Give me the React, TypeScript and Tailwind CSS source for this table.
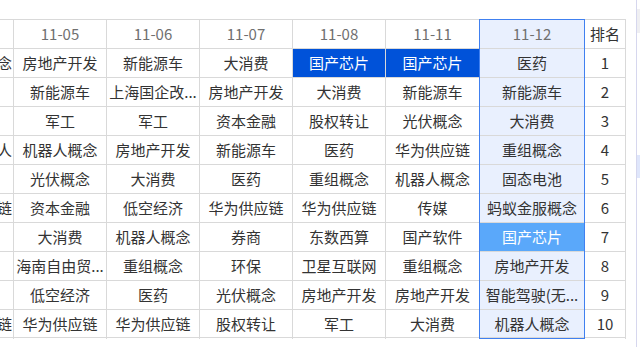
import React from "react";

type Cell = { t: string; v?: "dark" | "light" };

const leftCol: string[] = ["11-04", "机器人概念", "军工", "医药", "人形机器人", "传媒", "华为供应链", "券商", "环保", "大消费", "华为供应链"];

const cols: { head: string; cells: Cell[] }[] = [
  {
    head: "11-05",
    cells: ["房地产开发", "新能源车", "军工", "机器人概念", "光伏概念", "资本金融", "大消费", "海南自由贸...", "低空经济", "华为供应链"].map((t) => ({ t })),
  },
  {
    head: "11-06",
    cells: ["新能源车", "上海国企改...", "军工", "房地产开发", "大消费", "低空经济", "机器人概念", "重组概念", "医药", "华为供应链"].map((t) => ({ t })),
  },
  {
    head: "11-07",
    cells: ["大消费", "房地产开发", "资本金融", "新能源车", "医药", "华为供应链", "券商", "环保", "光伏概念", "股权转让"].map((t) => ({ t })),
  },
  {
    head: "11-08",
    cells: [
      { t: "国产芯片", v: "dark" },
      ...["大消费", "股权转让", "医药", "重组概念", "华为供应链", "东数西算", "卫星互联网", "房地产开发", "军工"].map((t) => ({ t })),
    ],
  },
  {
    head: "11-11",
    cells: [
      { t: "国产芯片", v: "dark" },
      ...["新能源车", "光伏概念", "华为供应链", "机器人概念", "传媒", "国产软件", "重组概念", "房地产开发", "大消费"].map((t) => ({ t })),
    ],
  },
];

const hlCells: Cell[] = [
  { t: "医药" },
  { t: "新能源车" },
  { t: "大消费" },
  { t: "重组概念" },
  { t: "固态电池" },
  { t: "蚂蚁金服概念" },
  { t: "国产芯片", v: "light" },
  { t: "房地产开发" },
  { t: "智能驾驶(无..." },
  { t: "机器人概念" },
];

const font = { fontFamily: '"Noto Sans CJK SC", "Noto Sans", sans-serif' };

function CellBox({
  text,
  idx,
  variant,
  head,
  dark,
  clip,
}: {
  text: string;
  idx: number;
  variant?: "dark" | "light";
  head?: boolean;
  dark?: boolean;
  clip?: boolean;
}) {
  const h = idx === 10 ? "h-[28px] leading-[27px]" : "h-[29px] leading-[28px]";
  let color = "text-[#333333]";
  let bg = "";
  if (head) color = dark ? "text-[#333333]" : "text-[#707070]";
  if (variant === "dark") {
    bg = "bg-[#0052d9]";
    color = "text-white";
  } else if (variant === "light") {
    bg = "bg-[#5aa8fa]";
    color = "text-white";
  }
  return (
    <div
      className={`${h} border-b border-[#d9d9d9] ${bg} ${color} text-[15px] text-center whitespace-nowrap overflow-hidden ${
        clip ? "" : "px-[1px]"
      }`}
    >
      {text}
    </div>
  );
}

export default function App() {
  return (
    <div className="flex h-[347px] w-[640px] overflow-hidden bg-white" style={font}>
      <div className="w-[636px] overflow-hidden pt-[19px]">
        <div className="ml-[-64px] flex">
          <div className="w-[78px] shrink-0 border-t border-r border-[#d9d9d9]">
            {leftCol.map((t, i) => (
              <CellBox key={i} text={t} idx={i} head={i === 0} clip />
            ))}
          </div>
          {cols.map((c, ci) => (
            <div
              key={c.head}
              className={`w-[93px] shrink-0 border-t border-[#d9d9d9] ${ci < 4 ? "border-r" : ""}`}
            >
              <CellBox text={c.head} idx={0} head />
              {c.cells.map((cell, i) => (
                <CellBox key={i} text={cell.t} idx={i + 1} variant={cell.v} />
              ))}
            </div>
          ))}
          <div className="w-[106px] shrink-0 self-start border border-[#4080f0] bg-[#e9f0fe]">
            <CellBox text="11-12" idx={0} head />
            {hlCells.map((cell, i) => (
              <CellBox key={i} text={cell.t} idx={i + 1} variant={cell.v} />
            ))}
          </div>
          <div className="w-[41px] shrink-0 border-t border-r border-[#d9d9d9]">
            <CellBox text="排名" idx={0} head dark />
            {Array.from({ length: 10 }, (_, i) => (
              <CellBox key={i} text={String(i + 1)} idx={i + 1} />
            ))}
          </div>
        </div>
      </div>
      <div className="w-px bg-[#d6d7ee]" />
      <div className="flex flex-1 flex-col">
        <div className="mt-[9px] h-[24px] bg-[#efeff2]" />
        <div className="mt-[122px] h-[23px] bg-[#dfe6fb]" />
      </div>
    </div>
  );
}
